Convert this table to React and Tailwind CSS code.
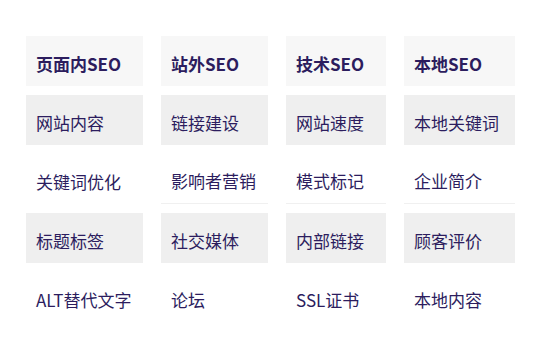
import React from 'react';

const headers = ["页面内SEO", "站外SEO", "技术SEO", "本地SEO"];

const rows = [
  ["网站内容", "链接建设", "网站速度", "本地关键词"],
  ["关键词优化", "影响者营销", "模式标记", "企业简介"],
  ["标题标签", "社交媒体", "内部链接", "顾客评价"],
  ["ALT替代文字", "论坛", "SSL证书", "本地内容"],
];

function Cell({ children, className }) {
  return (
    <div className={"h-[50px] flex items-center pl-[10px] pt-[5px] " + className}>
      {children}
    </div>
  );
}

export default function App() {
  return (
    <div
      className="w-[535px] h-[349px] bg-white pl-[26px] pt-[36px]"
      style={{ fontFamily: '"Noto Sans CJK SC", "Noto Sans", sans-serif' }}
    >
      <div className="grid grid-cols-[117px_107px_100px_111px] gap-x-[18px] gap-y-[9px] text-[17px] text-[#2c1d5e]">
        {headers.map((h) => (
          <Cell key={h} className="bg-[#f7f7f7] font-bold">
            {h}
          </Cell>
        ))}
        {rows.map((row, r) =>
          row.map((item, c) => (
            <Cell
              key={item}
              className={
                r % 2 === 0
                  ? "bg-[#efefef]"
                  : r === 1 && c > 0
                  ? "border-b border-[#f0f0f0]"
                  : ""
              }
            >
              {item}
            </Cell>
          ))
        )}
      </div>
    </div>
  );
}
